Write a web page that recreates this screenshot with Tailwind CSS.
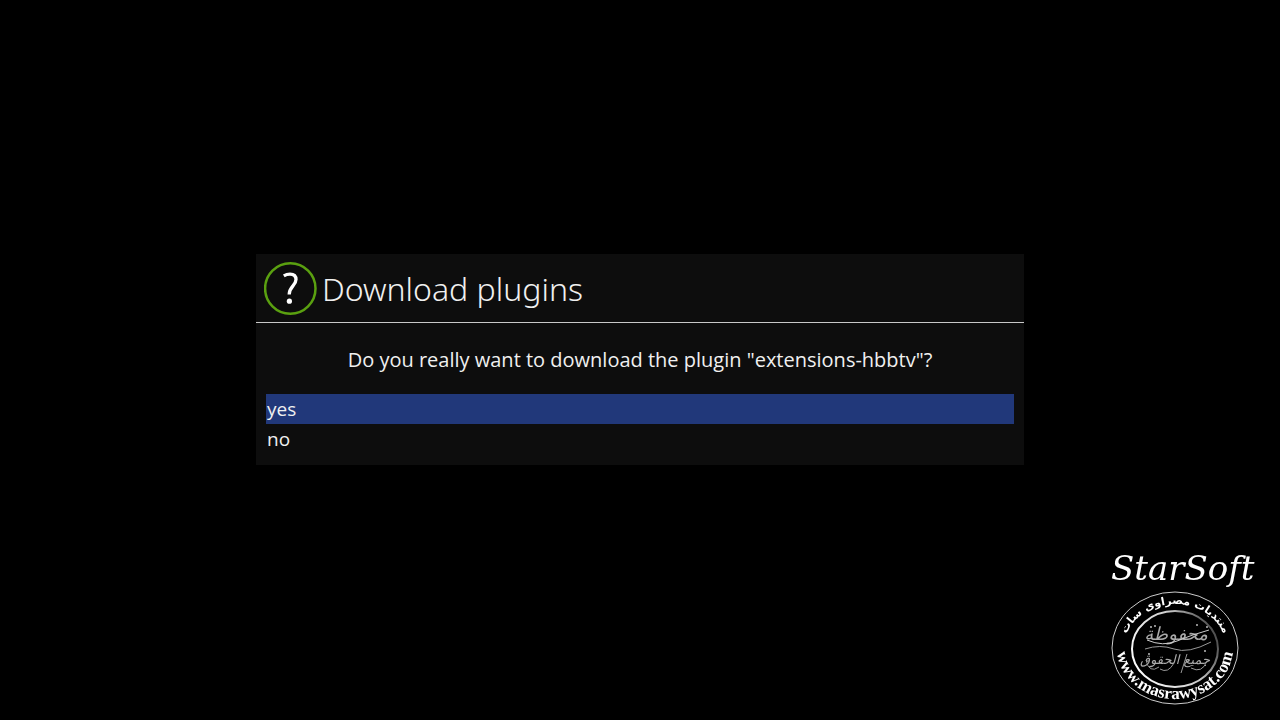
<!DOCTYPE html>
<html lang="en">
<head>
  <meta charset="utf-8">
  <meta name="viewport" content="width=device-width, initial-scale=1">
  <title>Download plugins</title>
  <script src="https://cdn.jsdelivr.net/npm/@tailwindcss/browser@4"></script>
</head>
<body class="bg-black min-h-screen pb-[2px] flex items-center justify-center overflow-hidden font-['Open_Sans','Noto_Sans',sans-serif] text-[#f0f0f0]">

  <main role="dialog" aria-labelledby="title" class="w-3/5 bg-[#0d0d0d]">
    <header class="flex items-center gap-1 h-[69px] pl-2 border-b border-[#c8c8c8]">
      <svg class="size-[54px] shrink-0" viewBox="0 0 54 54" fill="none" aria-hidden="true">
        <circle cx="26.3" cy="27.5" r="25.2" stroke="#5aa010" stroke-width="2.5"/>
        <path d="M19.8 14.8C21.800 13.600 23.900 13.100 26 13.100C29.900 13.100 32 15.300 32 18.600C32 24.600 25.200 25.500 25.200 33.500" stroke="#fff" stroke-width="3.3"/>
        <circle cx="25.4" cy="40.2" r="2.600" fill="#fff"/>
      </svg>
      <h1 id="title" class="pt-[2px] font-['Noto_Sans','Open_Sans',sans-serif] text-[32px] leading-[44px] font-light">Download plugins</h1>
    </header>

    <p class="pt-[23px] pb-[21px] text-center text-[20px] leading-[27px]">Do you really want to download the plugin "extensions-hbbtv"?</p>

    <div class="flex flex-col px-[10px] pb-[11px] text-[19px] leading-[30px]">
      <button type="button" class="h-[30px] pl-px text-left bg-[#21387a]">yes</button>
      <button type="button" class="h-[30px] pl-px text-left">no</button>
    </div>
  </main>

  <!-- watermark -->
  <svg class="fixed right-5 bottom-2 w-[152px] h-[164px]" viewBox="0 0 152 164" fill="none">
    <defs>
      <path id="arc-top" d="M16 100A51 44 0 0 1 118 100"/>
      <path id="arc-bottom" d="M9 100A58 51 0 0 0 125 100"/>
      <linearGradient id="ring" x1="0" y1="0.7" x2="1" y2="0.3">
        <stop offset="0" stop-color="#fff"/>
        <stop offset="0.6" stop-color="#ccc"/>
        <stop offset="1" stop-color="#444"/>
      </linearGradient>
    </defs>
    <text x="3" y="32" fill="#fff" font-size="34" font-style="italic" font-family="DejaVu Serif, serif">StarSoft</text>
    <ellipse cx="67" cy="100" rx="63" ry="56" stroke="#ccc"/>
    <ellipse cx="67" cy="101" rx="43" ry="38" stroke="url(#ring)" stroke-width="2"/>
    <text fill="#fff" font-size="11" font-weight="bold" text-anchor="middle" font-family="DejaVu Sans, sans-serif" direction="rtl"><textPath href="#arc-top" startOffset="50%">منتديات مصراوى سات</textPath></text>
    <text fill="#fff" font-size="17" font-weight="bold" text-anchor="middle" font-family="Liberation Serif, serif"><textPath href="#arc-bottom" startOffset="50%">www.masrawysat.com</textPath></text>
    <g fill="#aaa" font-size="18" font-style="italic" text-anchor="middle" font-family="DejaVu Sans, sans-serif">
      <text x="68" y="92">محفوظة</text>
      <text x="67" y="116" font-size="13">جميع الحقوق</text>
    </g>
    <!-- calligraphy flourishes -->
    <g stroke="#999" stroke-width="1">
      <path d="M39 92Q55 99 69 93T101 82" stroke="#ccc"/>
      <path d="M37 101Q52 96 66 101T103 94"/>
      <path d="M38 112Q41 126 51 119M52 121Q60 126 66 115M73 125L79 106M83 120Q94 126 99 113"/>
    </g>
    <g fill="#bbb">
      <circle cx="43" cy="79" r="1"/>
      <circle cx="47" cy="78" r="1"/>
      <circle cx="89" cy="77" r="1"/>
      <circle cx="99" cy="79" r="1"/>
      <circle cx="97" cy="103" r="1"/>
      <circle cx="41" cy="106" r="1"/>
    </g>
  </svg>
</body>
</html>
